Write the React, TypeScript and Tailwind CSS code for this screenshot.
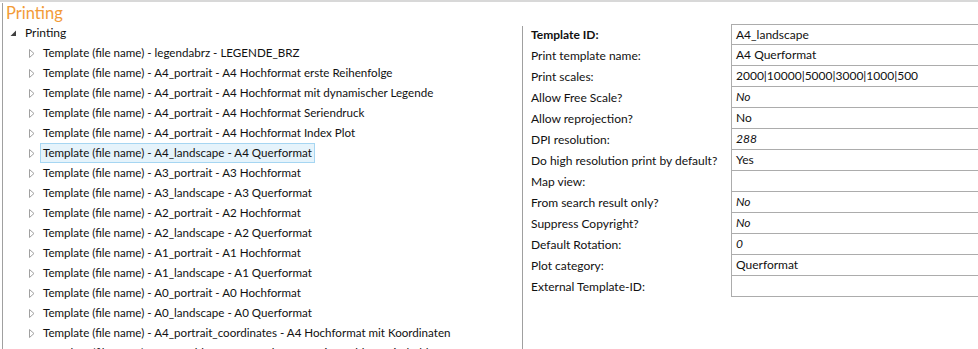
import React from "react";

const children = [
  "Template (file name) - legendabrz - LEGENDE_BRZ",
  "Template (file name) - A4_portrait - A4 Hochformat erste Reihenfolge",
  "Template (file name) - A4_portrait - A4 Hochformat mit dynamischer Legende",
  "Template (file name) - A4_portrait - A4 Hochformat Seriendruck",
  "Template (file name) - A4_portrait - A4 Hochformat Index Plot",
  "Template (file name) - A4_landscape - A4 Querformat",
  "Template (file name) - A3_portrait - A3 Hochformat",
  "Template (file name) - A3_landscape - A3 Querformat",
  "Template (file name) - A2_portrait - A2 Hochformat",
  "Template (file name) - A2_landscape - A2 Querformat",
  "Template (file name) - A1_portrait - A1 Hochformat",
  "Template (file name) - A1_landscape - A1 Querformat",
  "Template (file name) - A0_portrait - A0 Hochformat",
  "Template (file name) - A0_landscape - A0 Querformat",
  "Template (file name) - A4_portrait_coordinates - A4 Hochformat mit Koordinaten",
  "Template (file name) - A4_Hochkant - A4 Hochformat mit Hochkant Titelfeld",
];

const props: { label: string; value: string; italic?: boolean; bold?: boolean }[] = [
  { label: "Template ID:", value: "A4_landscape", bold: true },
  { label: "Print template name:", value: "A4 Querformat" },
  { label: "Print scales:", value: "2000|10000|5000|3000|1000|500" },
  { label: "Allow Free Scale?", value: "No", italic: true },
  { label: "Allow reprojection?", value: "No" },
  { label: "DPI resolution:", value: "288", italic: true },
  { label: "Do high resolution print by default?", value: "Yes" },
  { label: "Map view:", value: "" },
  { label: "From search result only?", value: "No", italic: true },
  { label: "Suppress Copyright?", value: "No", italic: true },
  { label: "Default Rotation:", value: "0", italic: true },
  { label: "Plot category:", value: "Querformat" },
  { label: "External Template-ID:", value: "" },
];

function OutlineTri() {
  return (
    <svg width="6" height="9" viewBox="0 0 6 9" className="shrink-0">
      <path d="M0.5 0.5 L5 4.5 L0.5 8.5 Z" fill="none" stroke="#a0a0a0" strokeWidth="1" />
    </svg>
  );
}

function FilledTri() {
  return (
    <svg width="7" height="7" viewBox="0 0 7 7" className="shrink-0">
      <path d="M6 0.5 L6 6 L0.5 6 Z" fill="#404040" />
    </svg>
  );
}

export default function App() {
  return (
    <div
      className="w-[978px] h-[349px] overflow-hidden bg-white border-t-2 border-[#d8d8d8] flex text-[12px] text-[#111]"
      style={{ fontFamily: 'Lato, "Noto Sans", sans-serif' }}
    >
      <div className="ml-[2px] mt-[1px] w-[520px] border-l border-[#a0a0a0] flex flex-col text-[11.6px]">
        <div className="h-[20px] pl-[3px] text-[16.5px] leading-[20px] text-[#f29b38] font-normal shrink-0">Printing</div>
        <div className="h-[20px] flex items-center shrink-0">
          <div className="w-[22px] pl-[7px] flex items-center">
            <FilledTri />
          </div>
          <span className="text-[12px]">Printing</span>
        </div>
        {children.map((c) => {
          const sel = c.includes("A4_landscape");
          return (
            <div key={c} className="h-[20px] flex items-center shrink-0">
              <div className="w-[37px] pl-[26px] flex items-center">
                <OutlineTri />
              </div>
              <span
                className={
                  sel
                    ? "h-[20px] leading-[18px] px-[2px] border border-[#a6d6f2] bg-[#e5f3fb] whitespace-nowrap"
                    : "px-[3px] whitespace-nowrap"
                }
              >
                {c}
              </span>
            </div>
          );
        })}
      </div>
      <div className="flex flex-1 pt-[22px]">
        <div className="mt-[2px] w-px bg-[#a0a0a0] self-stretch" />
        <div className="flex-1 flex flex-col">
          {props.map((p, i) => (
            <div key={p.label} className="flex h-[21px]">
              <div className={"w-[208px] pl-[8px] leading-[22px] whitespace-nowrap " + (p.bold ? "font-bold" : "")}>
                {p.label}
              </div>
              <div
                className={
                  "flex-1 border-l border-b border-[#acacac] pl-[4px] leading-[19px] whitespace-nowrap " +
                  (i === 0 ? "border-t" : "") +
                  (p.italic ? " italic" : "")
                }
              >
                {p.value}
              </div>
            </div>
          ))}
        </div>
      </div>
    </div>
  );
}
